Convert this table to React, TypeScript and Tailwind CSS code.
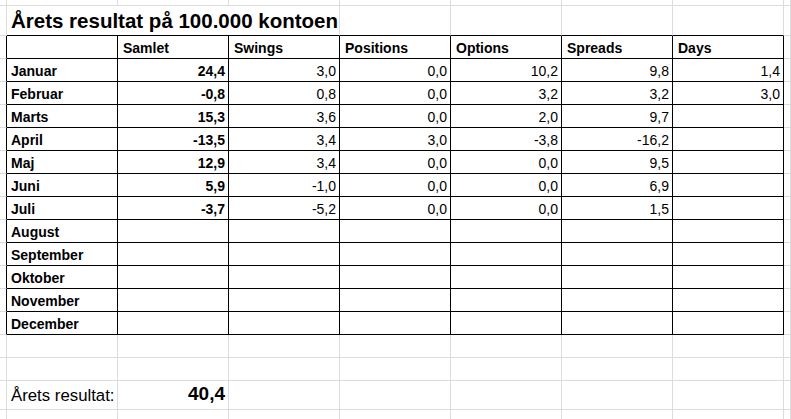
const months = [
  { name: "Januar", samlet: "24,4", swings: "3,0", positions: "0,0", options: "10,2", spreads: "9,8", days: "1,4" },
  { name: "Februar", samlet: "-0,8", swings: "0,8", positions: "0,0", options: "3,2", spreads: "3,2", days: "3,0" },
  { name: "Marts", samlet: "15,3", swings: "3,6", positions: "0,0", options: "2,0", spreads: "9,7", days: "" },
  { name: "April", samlet: "-13,5", swings: "3,4", positions: "3,0", options: "-3,8", spreads: "-16,2", days: "" },
  { name: "Maj", samlet: "12,9", swings: "3,4", positions: "0,0", options: "0,0", spreads: "9,5", days: "" },
  { name: "Juni", samlet: "5,9", swings: "-1,0", positions: "0,0", options: "0,0", spreads: "6,9", days: "" },
  { name: "Juli", samlet: "-3,7", swings: "-5,2", positions: "0,0", options: "0,0", spreads: "1,5", days: "" },
  { name: "August" },
  { name: "September" },
  { name: "Oktober" },
  { name: "November" },
  { name: "December" },
];

const headers = ["Samlet", "Swings", "Positions", "Options", "Spreads", "Days"];

const grid = "border-r border-b border-[#dcdcdc]";
const edge = "border-r border-b border-black";

const Blank = ({ count }: { count: number }) => (
  <>
    {Array.from({ length: count }).map((_, i) => (
      <div key={i} className={grid} />
    ))}
  </>
);

export default function App() {
  return (
    <div
      className="h-screen w-full overflow-hidden bg-white text-black"
      style={{ fontFamily: '"Liberation Sans", Arial, sans-serif' }}
    >
      <div className="grid grid-cols-[7px_repeat(7,111px)_1fr] grid-rows-[6px_30px_repeat(13,23px)_23px_23px_29px_23px]">
        {/* top partial row */}
        <Blank count={9} />

        {/* title row */}
        <div className={grid} />
        <div className="col-span-3 flex items-end overflow-visible whitespace-nowrap border-r border-b border-r-[#dcdcdc] border-b-black pb-[2px] pl-1 text-[20.5px] font-bold leading-[24px]">
          Årets resultat på 100.000 kontoen
        </div>
        {Array.from({ length: 4 }).map((_, i) => (
          <div key={i} className="border-r border-b border-r-[#dcdcdc] border-b-black" />
        ))}
        <div className={grid} />

        {/* header row */}
        <div className="border-r border-b border-r-black border-b-[#dcdcdc]" />
        <div className={edge} />
        {headers.map((h) => (
          <div key={h} className={`${edge} flex items-end pb-[2px] pl-[5px] text-[14px] font-bold leading-[16px]`}>
            {h}
          </div>
        ))}
        <div className={grid} />

        {/* month rows */}
        {months.map((m) => (
          <div key={m.name} className="contents">
            <div className="border-r border-b border-r-black border-b-[#dcdcdc]" />
            <div className={`${edge} flex items-end pb-[2px] pl-1 text-[14px] font-bold leading-[16px]`}>
              {m.name}
            </div>
            <div className={`${edge} flex items-end justify-end pb-[2px] pr-[3px] text-[14px] font-bold leading-[16px]`}>
              {m.samlet ?? ""}
            </div>
            {[m.swings, m.positions, m.options, m.spreads, m.days].map((v, i) => (
              <div key={i} className={`${edge} flex items-end justify-end pb-[2px] pr-[3px] text-[14px] leading-[16px]`}>
                {v ?? ""}
              </div>
            ))}
            <div className={grid} />
          </div>
        ))}

        {/* empty rows below table */}
        <Blank count={18} />

        {/* result row */}
        <div className={grid} />
        <div className={`${grid} flex items-end overflow-hidden whitespace-nowrap pb-[4px] pl-1 text-[16.8px] leading-[19px]`}>
          Årets resultat:
        </div>
        <div className={`${grid} flex items-end justify-end pb-[4px] pr-[3px] text-[19px] font-bold leading-[22px]`}>
          40,4
        </div>
        <Blank count={6} />

        {/* last partial row */}
        <Blank count={9} />
      </div>
    </div>
  );
}
